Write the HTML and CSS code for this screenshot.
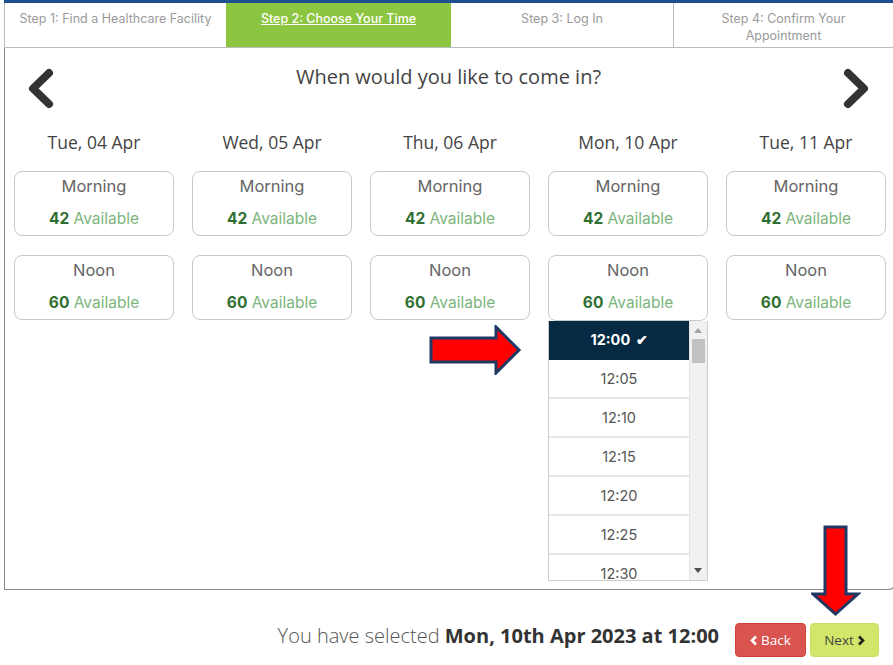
FILE: index.html
```html
<!DOCTYPE html>
<html lang="en">
<head>
  <meta charset="UTF-8" />
  <title>Book an Appointment</title>
  <link rel="stylesheet" href="styles.css">
</head>
<body>
  <div class="page">
    <div class="steps">
      <div class="step">Step 1: Find a Healthcare Facility</div>
      <div class="step active"><a href="#">Step 2: Choose Your Time</a></div>
      <div class="step">Step 3: Log In</div>
      <div class="step">Step 4: Confirm Your Appointment</div>
    </div>

    <div class="panel">
      <div class="nav-row">
        <svg class="chev" width="28" height="41" viewBox="0 0 28 41"><polyline points="23,5 7,20.5 23,36" fill="none" stroke="#333" stroke-width="8" stroke-linejoin="round" stroke-linecap="round"/></svg>
        <h2>When would you like to come in?</h2>
        <svg class="chev" width="28" height="41" viewBox="0 0 28 41"><polyline points="5,5 21,20.5 5,36" fill="none" stroke="#333" stroke-width="8" stroke-linejoin="round" stroke-linecap="round"/></svg>
      </div>

      <div class="days">
        <div class="day">
          <div class="date">Tue, 04 Apr</div>
          <div class="slot"><div class="slot-name">Morning</div><div class="avail"><b>42</b> Available</div></div>
          <div class="slot"><div class="slot-name">Noon</div><div class="avail"><b>60</b> Available</div></div>
        </div>
        <div class="day">
          <div class="date">Wed, 05 Apr</div>
          <div class="slot"><div class="slot-name">Morning</div><div class="avail"><b>42</b> Available</div></div>
          <div class="slot"><div class="slot-name">Noon</div><div class="avail"><b>60</b> Available</div></div>
        </div>
        <div class="day">
          <div class="date">Thu, 06 Apr</div>
          <div class="slot"><div class="slot-name">Morning</div><div class="avail"><b>42</b> Available</div></div>
          <div class="slot"><div class="slot-name">Noon</div><div class="avail"><b>60</b> Available</div></div>
        </div>
        <div class="day">
          <div class="date">Mon, 10 Apr</div>
          <div class="slot"><div class="slot-name">Morning</div><div class="avail"><b>42</b> Available</div></div>
          <div class="slot open"><div class="slot-name">Noon</div><div class="avail"><b>60</b> Available</div></div>
          <div class="times">
            <ul class="time-list">
              <li class="selected">12:00 <span class="check">&#10004;</span></li>
              <li>12:05</li>
              <li>12:10</li>
              <li>12:15</li>
              <li>12:20</li>
              <li>12:25</li>
              <li>12:30</li>
            </ul>
            <div class="scrollbar">
              <span class="sb-up"></span>
              <span class="sb-thumb"></span>
              <span class="sb-down"></span>
            </div>
          </div>
        </div>
        <div class="day">
          <div class="date">Tue, 11 Apr</div>
          <div class="slot"><div class="slot-name">Morning</div><div class="avail"><b>42</b> Available</div></div>
          <div class="slot"><div class="slot-name">Noon</div><div class="avail"><b>60</b> Available</div></div>
        </div>
      </div>
    </div>

    <div class="footer">
      <p class="summary">You have selected <strong>Mon, 10th Apr 2023 at 12:00</strong></p>
      <button class="btn back"><svg width="8" height="11" viewBox="0 0 8 11"><polyline points="6,1.5 2,5.5 6,9.5" fill="none" stroke="currentColor" stroke-width="2.6"/></svg>Back</button>
      <button class="btn next">Next<svg width="8" height="11" viewBox="0 0 8 11"><polyline points="2,1.5 6,5.5 2,9.5" fill="none" stroke="currentColor" stroke-width="2.6"/></svg></button>
    </div>

    <!-- annotation arrows -->
    <svg class="mark mark-right" width="94" height="50" viewBox="0 0 94 50">
      <polygon points="2,13 67,13 67,2 90,25 67,48 67,37 2,37" fill="#f00" stroke="#1f3864" stroke-width="3" stroke-linejoin="miter"/>
    </svg>
    <svg class="mark mark-down" width="50" height="92" viewBox="0 0 50 92">
      <polygon points="14,2 35,2 35,69 47,69 24.5,89 2,69 14,69" fill="#f00" stroke="#1f3864" stroke-width="3" stroke-linejoin="miter"/>
    </svg>
  </div>
</body>
</html>
```

FILE: styles.css
```css
body {
  margin: 0;
  overflow: hidden;
  background: #fff;
  font-family: 'Open Sans', 'Noto Sans', sans-serif;
  color: #444;
}

.page {
  position: relative;
  width: 893px;
  height: 665px;
  overflow: hidden;
}

.steps {
  display: grid;
  grid-template-columns: 222px 224px 223px 1fr;
  margin-left: 4px;
  border-top: 3px solid #1d4f91;
  border-bottom: 1px solid #bbb;
  height: 44px;
}

.step {
  font-family: Inter, sans-serif;
  font-size: 12.5px;
  line-height: 17px;
  color: #9a9a9a;
  text-align: center;
  padding: 7px 8px 0;
  border-left: 1px solid #bbb;
}

.step:first-child {
  white-space: nowrap;
}

.step:last-child {
  padding: 7px 30px 0;
}

.step.active {
  background: #8cc540;
  border-left-color: #8cc540;
}

.step.active a {
  color: #fff;
  font-weight: 500;
  text-decoration: underline;
}

.step.active + .step {
  border-left-color: #8cc540;
}

.panel {
  margin-left: 4px;
  width: 889px;
  border-left: 1px solid #888;
  border-right: 1px solid #888;
  border-bottom: 1px solid #888;
  border-bottom-right-radius: 6px;
  padding-bottom: 8px;
}

.nav-row {
  display: flex;
  justify-content: space-between;
  align-items: flex-start;
  padding: 20px 23px 0 21px;
}

.nav-row h2 {
  margin: -3px 0 0;
  font-weight: 400;
  font-size: 20px;
  line-height: 24px;
  color: #444;
}

.days {
  display: grid;
  grid-template-columns: repeat(5, 160px);
  gap: 0 18px;
  margin: 21px 0 0 9px;
  align-items: start;
}

.date {
  font-size: 17.5px;
  line-height: 24px;
  text-align: center;
  color: #444;
  margin-bottom: 17px;
}

.slot {
  border: 1px solid #c8c8c8;
  border-radius: 8px;
  height: 65px;
  box-sizing: border-box;
  padding-top: 3px;
  text-align: center;
  font-family: Inter, sans-serif;
  margin-bottom: 19px;
}

.slot.open {
  margin-bottom: 0;
  height: 66px;
}

.slot-name {
  font-size: 16.5px;
  line-height: 22px;
  color: #666;
}

.avail {
  margin-top: 11px;
  font-size: 15.5px;
  line-height: 22px;
  color: #7cb57c;
}

.avail b {
  color: #2f6f31;
  font-weight: 700;
}

.times {
  display: flex;
  height: 260px;
  border: 1px solid #ccc;
  border-top: none;
  box-sizing: border-box;
  overflow: hidden;
  background: #fff;
}

.time-list {
  list-style: none;
  margin: 0;
  padding: 0;
  flex: 1;
}

.time-list li {
  height: 37px;
  line-height: 37px;
  border-bottom: 2px solid #e6e6e6;
  text-align: center;
  font-family: Inter, sans-serif;
  font-size: 14.5px;
  color: #555;
}

.time-list li.selected {
  background: #062a44;
  border-bottom-color: #062a44;
  color: #fff;
  font-weight: 700;
}

.check {
  font-size: 14px;
  margin-left: 2px;
}

.scrollbar {
  position: relative;
  width: 17px;
  background: #f1f1f1;
  border-left: 1px solid #e4e4e4;
}

.sb-up,
.sb-down {
  position: absolute;
  left: 4px;
  width: 0;
  height: 0;
  border-left: 4px solid transparent;
  border-right: 4px solid transparent;
}

.sb-up {
  top: 7px;
  border-bottom: 5px solid #a3a3a3;
}

.sb-down {
  bottom: 7px;
  border-top: 5px solid #505050;
}

.sb-thumb {
  position: absolute;
  top: 18px;
  left: 2px;
  width: 13px;
  height: 24px;
  background: #c1c1c1;
}

.footer {
  display: flex;
  justify-content: flex-end;
  align-items: center;
  gap: 4px;
  padding-right: 14px;
  margin-top: 33px;
}

.summary {
  margin: -9px 12px 0 0;
  font-size: 20px;
  color: #555;
  font-weight: 300;
}

.summary strong {
  color: #333;
  font-weight: 700;
}

.btn {
  display: flex;
  align-items: center;
  justify-content: center;
  gap: 3px;
  height: 34px;
  border: 1px solid transparent;
  border-radius: 4px;
  font-family: 'Open Sans', sans-serif;
  font-size: 13.5px;
  padding: 0;
  white-space: nowrap;
}

.btn.back {
  width: 71px;
  background: #d9534f;
  border-color: #d43f3a;
  color: #fff;
}

.btn.next {
  width: 69px;
  background: #d2e66a;
  border-color: #cbe05f;
  color: #444;
}

.btn.next svg {
  color: #222;
}

.mark {
  position: absolute;
}

.mark-right {
  left: 429px;
  top: 325px;
}

.mark-down {
  left: 811px;
  top: 525px;
}
```
